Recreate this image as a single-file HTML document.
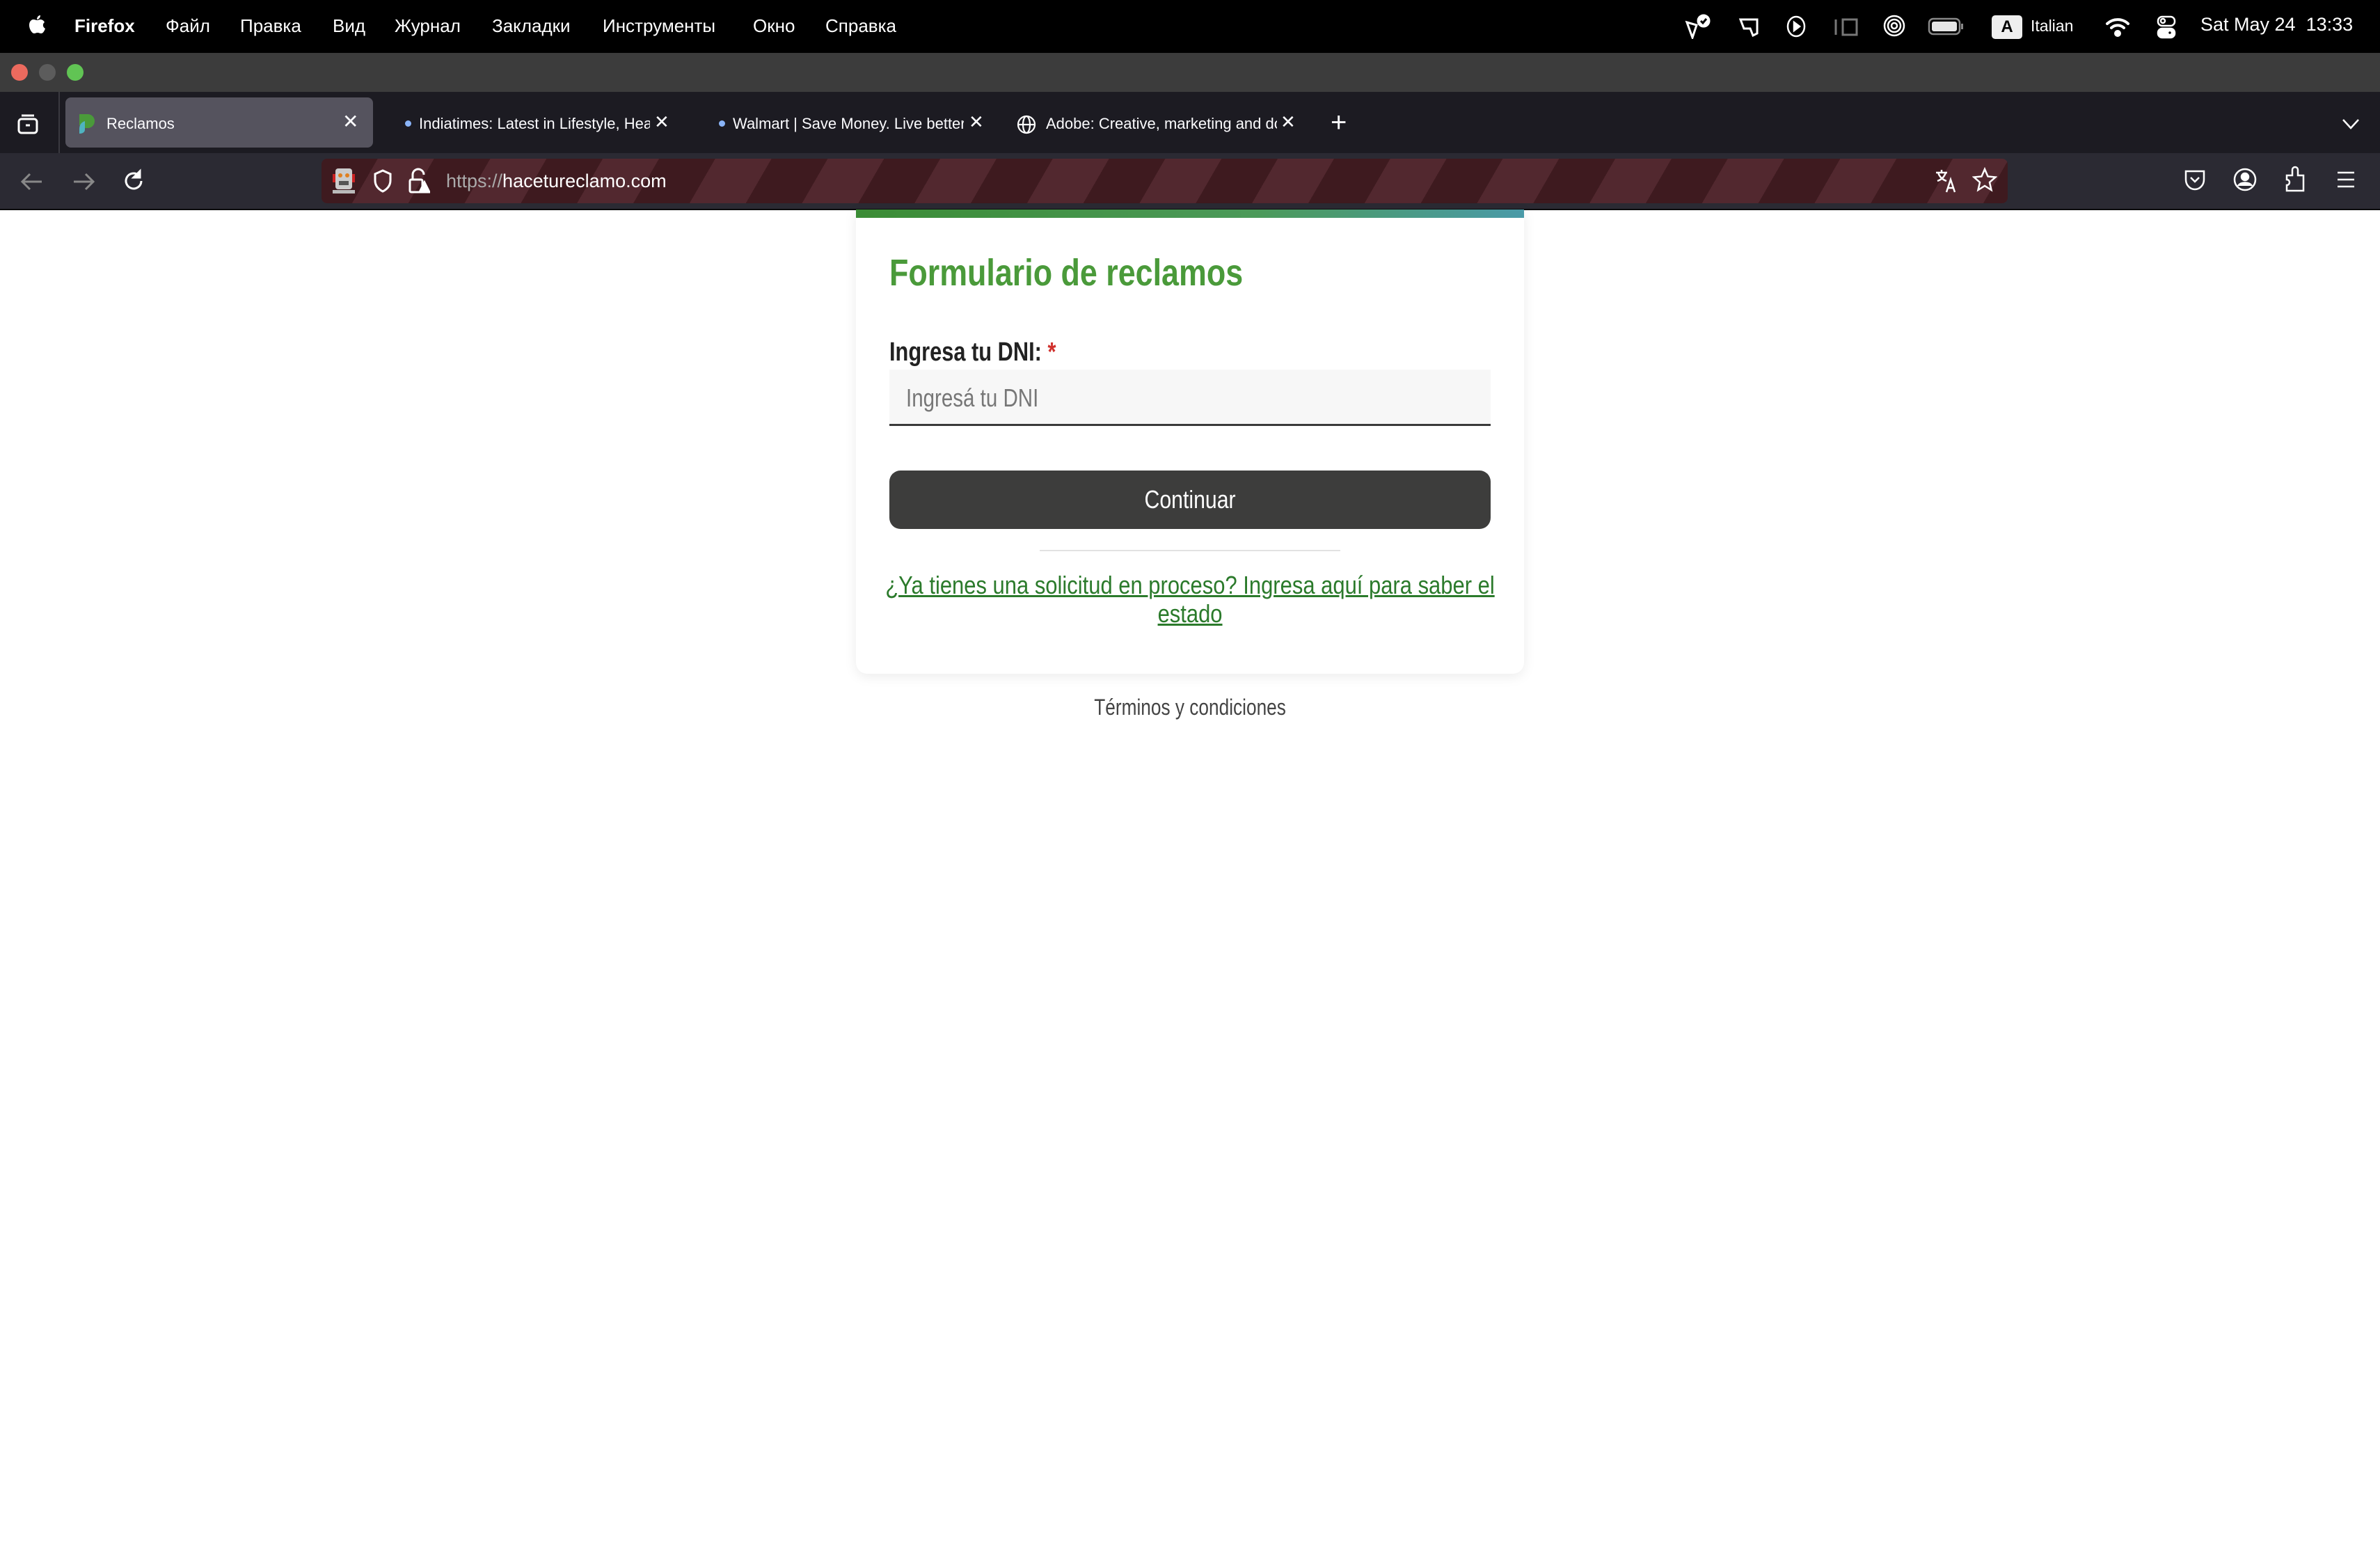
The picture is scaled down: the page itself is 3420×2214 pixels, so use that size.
<!DOCTYPE html>
<html><head><meta charset="utf-8"><style>
*{margin:0;padding:0;box-sizing:border-box}
body{width:3420px;height:2214px;background:#fff;position:relative;overflow:hidden;font-family:"Liberation Sans","Noto Sans CJK SC",sans-serif}
.abs{position:absolute;white-space:nowrap}
#menu{position:absolute;left:0;top:0;width:3420px;height:76px;background:#000;color:#fff;font-size:26px}
#menu .abs{top:22px}
#title{position:absolute;left:0;top:76px;width:3420px;height:56px;background:#3c3c3c}
.tl{position:absolute;top:92px;width:24px;height:24px;border-radius:50%}
#tabs{position:absolute;left:0;top:132px;width:3420px;height:88px;background:#1c1b22;color:#fbfbfe;font-size:22px}
#tool{position:absolute;left:0;top:220px;width:3420px;height:82px;background:#2b2a33;border-bottom:2px solid #0c0c0d}
#url{position:absolute;left:462px;top:228px;width:2423px;height:64px;border-radius:8px;background:repeating-linear-gradient(120deg,#3e1a1f 0 70px,#52282f 70px 140px)}
.n{display:inline-block;transform:scaleX(.82);transform-origin:left center}
.c{display:inline-block;transform:scaleX(.82);transform-origin:center center}
svg{position:absolute}
</style></head><body>
<div id="menu">
<svg style="left:40px;top:20px" width="26" height="32" viewBox="0 0 26 32"><path d="M18 2c0 3-2 6-5 6 0-3 2-6 5-6zM13 9c2 0 4-1 5-1 3 0 5 2 6 4-3 2-3 7 1 9-1 3-3 7-6 7-2 0-3-1-5-1s-3 1-5 1c-3 0-7-6-7-12 0-5 3-8 6-8 2 0 4 1 5 1z" fill="#fff"/></svg>
<div class="abs" style="left:107px;font-weight:bold">Firefox</div>
<div class="abs" style="left:238px">Файл</div>
<div class="abs" style="left:345px">Правка</div>
<div class="abs" style="left:478px">Вид</div>
<div class="abs" style="left:567px">Журнал</div>
<div class="abs" style="left:707px">Закладки</div>
<div class="abs" style="left:866px">Инструменты</div>
<div class="abs" style="left:1082px">Окно</div>
<div class="abs" style="left:1186px">Справка</div>
<svg style="left:2420px;top:20px" width="40" height="36" viewBox="0 0 40 36" fill="none" stroke="#fff" stroke-width="3"><path d="M4 12l14 4-6 18z"/><circle cx="28" cy="10" r="8" fill="#fff"/><path d="M24 10l3 3 5-6" stroke="#000"/></svg>
<svg style="left:2498px;top:24px" width="32" height="30" viewBox="0 0 32 30" fill="none" stroke="#fff" stroke-width="3"><path d="M3 4h24v20l-6 3-4-10H8z"/></svg>
<svg style="left:2566px;top:22px" width="30" height="32" viewBox="0 0 30 32" fill="none" stroke="#fff" stroke-width="2.5"><ellipse cx="15" cy="16" rx="12" ry="14"/><path d="M12 10v12l8-6z" fill="#fff"/></svg>
<svg style="left:2634px;top:24px" width="38" height="30" viewBox="0 0 38 30" fill="none" stroke="#777" stroke-width="3"><path d="M4 4v22M14 4h20v22H14z"/></svg>
<svg style="left:2705px;top:20px" width="34" height="36" viewBox="0 0 34 36" fill="none" stroke="#fff" stroke-width="2.5"><circle cx="17" cy="17" r="14"/><circle cx="17" cy="17" r="9"/><circle cx="17" cy="17" r="4"/></svg>
<svg style="left:2770px;top:25px" width="52" height="26" viewBox="0 0 52 26"><rect x="2" y="2" width="44" height="22" rx="6" fill="none" stroke="#888" stroke-width="2.5"/><rect x="6" y="6" width="36" height="14" rx="3" fill="#e5e5e5"/><rect x="48" y="9" width="3" height="8" fill="#888"/></svg>
<div class="abs" style="left:2862px;top:22px;width:44px;height:34px;background:#eee;border-radius:5px;color:#000;text-align:center;font-weight:bold;font-size:24px;line-height:34px">A</div>
<div class="abs" style="left:2918px;top:24px;font-size:23px">Italian</div>
<svg style="left:3024px;top:24px" width="38" height="30" viewBox="0 0 38 30" fill="none" stroke="#fff" stroke-width="4" stroke-linecap="round"><path d="M4 10a22 22 0 0 1 30 0M10 16a13 13 0 0 1 18 0"/><circle cx="19" cy="24" r="3" fill="#fff"/></svg>
<svg style="left:3098px;top:22px" width="30" height="34" viewBox="0 0 30 34" fill="none" stroke="#fff" stroke-width="2.5"><rect x="3" y="2" width="24" height="13" rx="6"/><rect x="3" y="19" width="24" height="13" rx="6" fill="#fff"/><circle cx="10" cy="8" r="3"/><circle cx="20" cy="25" r="3" fill="#000"/></svg>
<div class="abs" style="left:3162px;top:20px;font-size:27px">Sat May 24&nbsp; 13:33</div>
</div>
<div id="title"></div>
<div class="tl" style="left:16px;background:#ec6a5e"></div>
<div class="tl" style="left:56px;background:#5c5c5c"></div>
<div class="tl" style="left:96px;background:#61c454"></div>
<div id="tabs">
<div class="abs" style="left:84px;top:0;width:2px;height:88px;background:#3a3940"></div>
<svg style="left:24px;top:30px" width="32" height="32" viewBox="0 0 32 32" fill="none" stroke="#fff" stroke-width="3"><rect x="3" y="9" width="26" height="20" rx="4"/><path d="M7 4h18"/><path d="M13 18h6"/></svg>
<div class="abs" style="left:94px;top:8px;width:442px;height:72px;background:#55535e;border-radius:8px"></div>
<svg style="left:112px;top:30px" width="28" height="32" viewBox="0 0 28 32"><path d="M2 2h12a10 10 0 0 1 0 20H10v-4H2z" fill="#4a9a3a"/><path d="M10 12c-6 2-8 6-8 12v6c6 0 8-3 8-6z" fill="#4fb3c0"/></svg>
<div class="abs" style="left:153px;top:33px">Reclamos</div>
<div class="abs" style="left:492px;top:26px;font-size:28px">✕</div>
<div class="abs" style="left:582px;top:41px;width:9px;height:9px;border-radius:50%;background:#8ab4f8"></div>
<div class="abs" style="left:602px;top:33px;width:332px;overflow:hidden">Indiatimes: Latest in Lifestyle, Health</div>
<div class="abs" style="left:940px;top:28px;font-size:26px">✕</div>
<div class="abs" style="left:1033px;top:41px;width:9px;height:9px;border-radius:50%;background:#8ab4f8"></div>
<div class="abs" style="left:1053px;top:33px;width:332px;overflow:hidden">Walmart | Save Money. Live better</div>
<div class="abs" style="left:1392px;top:28px;font-size:26px">✕</div>
<svg style="left:1460px;top:32px" width="30" height="30" viewBox="0 0 30 30" fill="none" stroke="#fff" stroke-width="2.2"><circle cx="15" cy="15" r="12"/><ellipse cx="15" cy="15" rx="5" ry="12"/><path d="M3 15h24"/></svg>
<div class="abs" style="left:1503px;top:33px;width:332px;overflow:hidden">Adobe: Creative, marketing and document</div>
<div class="abs" style="left:1840px;top:28px;font-size:26px">✕</div>
<div class="abs" style="left:1912px;top:22px;font-size:40px;font-weight:300">+</div>
<svg style="left:3364px;top:36px" width="28" height="20" viewBox="0 0 28 20" fill="none" stroke="#fff" stroke-width="2.5"><path d="M3 4l11 12 11-12"/></svg>
</div>
<div id="tool">
<svg style="left:28px;top:26px" width="36" height="30" viewBox="0 0 36 30" fill="none" stroke="#888" stroke-width="3"><path d="M32 15H5M15 4L4 15l11 11"/></svg>
<svg style="left:102px;top:26px" width="36" height="30" viewBox="0 0 36 30" fill="none" stroke="#888" stroke-width="3"><path d="M4 15h27M21 4l11 11-11 11"/></svg>
<svg style="left:174px;top:22px" width="36" height="36" viewBox="0 0 36 36" fill="none" stroke="#fff" stroke-width="3"><path d="M29 18a11 11 0 1 1-4-8.5"/><path d="M27 4v9h-9z" fill="#fff"/></svg>
</div>
<div id="url">
<svg style="left:16px;top:12px" width="32" height="40" viewBox="0 0 32 40"><rect x="4" y="2" width="24" height="30" rx="4" fill="#ccc"/><circle cx="11" cy="12" r="3" fill="#e08020"/><circle cx="21" cy="12" r="3" fill="#e08020"/><rect x="9" y="20" width="14" height="6" fill="#555"/><rect x="0" y="33" width="32" height="5" fill="#bbb"/><rect x="0" y="10" width="4" height="12" fill="#c22"/><rect x="28" y="10" width="4" height="12" fill="#c22"/></svg>
<svg style="left:73px;top:14px" width="30" height="36" viewBox="0 0 30 36" fill="none" stroke="#fff" stroke-width="3"><path d="M15 3l11 5v9c0 8-5 13-11 16C9 30 4 25 4 17V8z"/></svg>
<svg style="left:124px;top:12px" width="32" height="40" viewBox="0 0 32 40" fill="none" stroke="#fff" stroke-width="3"><path d="M7 18v-7a8 8 0 0 1 16 0"/><rect x="3" y="18" width="18" height="18" rx="2"/><path d="M24 22l7 14H17z" fill="#fff"/></svg>
<div class="abs" style="left:179px;top:17px;font-size:27px;color:#aaa">https://<span style="color:#fff">hacetureclamo.com</span></div>
<svg style="left:2318px;top:14px" width="34" height="36" viewBox="0 0 34 36" fill="none" stroke="#fff" stroke-width="2.5"><path d="M2 6h16M10 2v4M5 6c2 6 6 10 12 12M16 6c-2 6-6 10-12 12"/><path d="M17 34l6-18 6 18M19 28h8"/></svg>
<svg style="left:2372px;top:12px" width="36" height="38" viewBox="0 0 36 38" fill="none" stroke="#fff" stroke-width="2.5"><path d="M18 3l4.5 10.5 11 1-8.5 7.5 2.5 11L18 27l-9.5 6 2.5-11L2.5 14.5l11-1z"/></svg>
</div>
<svg style="left:3138px;top:242px" width="32" height="36" viewBox="0 0 32 36" fill="none" stroke="#fff" stroke-width="2.5"><path d="M3 4h26v12c0 8-6 14-13 14S3 24 3 16z"/><path d="M10 13l6 6 6-6"/></svg>
<svg style="left:3208px;top:240px" width="36" height="36" viewBox="0 0 36 36" fill="none" stroke="#fff" stroke-width="2.5"><circle cx="18" cy="18" r="15"/><circle cx="18" cy="14" r="5" fill="#fff"/><path d="M8 27c4-6 16-6 20 0" fill="#fff"/></svg>
<svg style="left:3282px;top:238px" width="34" height="40" viewBox="0 0 34 40" fill="none" stroke="#fff" stroke-width="2.5"><path d="M4 14h8V6a4 4 0 0 1 8 0v8h8v22H4V28a4 4 0 0 0 0-8z"/></svg>
<svg style="left:3356px;top:244px" width="30" height="28" viewBox="0 0 30 28" fill="none" stroke="#fff" stroke-width="2.5"><path d="M3 4h24M3 14h24M3 24h24"/></svg>

<div class="abs" style="left:1230px;top:301px;width:960px;height:667px;background:#fff;border-radius:0 0 16px 16px;box-shadow:0 4px 18px rgba(0,0,0,.08)"></div>
<div class="abs" style="left:1230px;top:301px;width:960px;height:12px;background:linear-gradient(90deg,#3b8c35,#4c9a5a 60%,#4a9aa8)"></div>
<div class="abs" style="left:1278px;top:361px;font-size:54px;font-weight:bold;color:#4a9a3a"><span class="n" style="transform:scaleX(.83)">Formulario de reclamos</span></div>
<div class="abs" style="left:1278px;top:485px;font-size:38px;font-weight:bold;color:#222"><span class="n" style="transform:scaleX(.81)">Ingresa tu DNI: <span style="color:#d0312d">*</span></span></div>
<div class="abs" style="left:1278px;top:531px;width:864px;height:81px;background:#f7f7f7;border-bottom:3px solid #3a3a3a"></div>
<div class="abs" style="left:1302px;top:551px;font-size:36px;color:#777"><span class="n" style="transform:scaleX(.82)">Ingresá tu DNI</span></div>
<div class="abs" style="left:1278px;top:676px;width:864px;height:84px;background:#3d3d3c;border-radius:16px;color:#fff;font-size:36px;text-align:center;line-height:84px"><span class="c" style="transform:scaleX(.84)">Continuar</span></div>
<div class="abs" style="left:1494px;top:790px;width:432px;height:2px;background:#e2e2e2"></div>
<div class="abs" style="left:710px;top:820px;width:2000px;text-align:center;font-size:36px;line-height:41px;color:#2b7a2b"><span class="c" style="transform:scaleX(.86);text-decoration:underline">¿Ya tienes una solicitud en proceso? Ingresa aquí para saber el</span><br><span class="c" style="transform:scaleX(.86);text-decoration:underline">estado</span></div>
<div class="abs" style="left:1230px;top:998px;width:960px;text-align:center;font-size:32px;color:#444"><span class="c" style="transform:scaleX(.82)">Términos y condiciones</span></div>
</body></html>
